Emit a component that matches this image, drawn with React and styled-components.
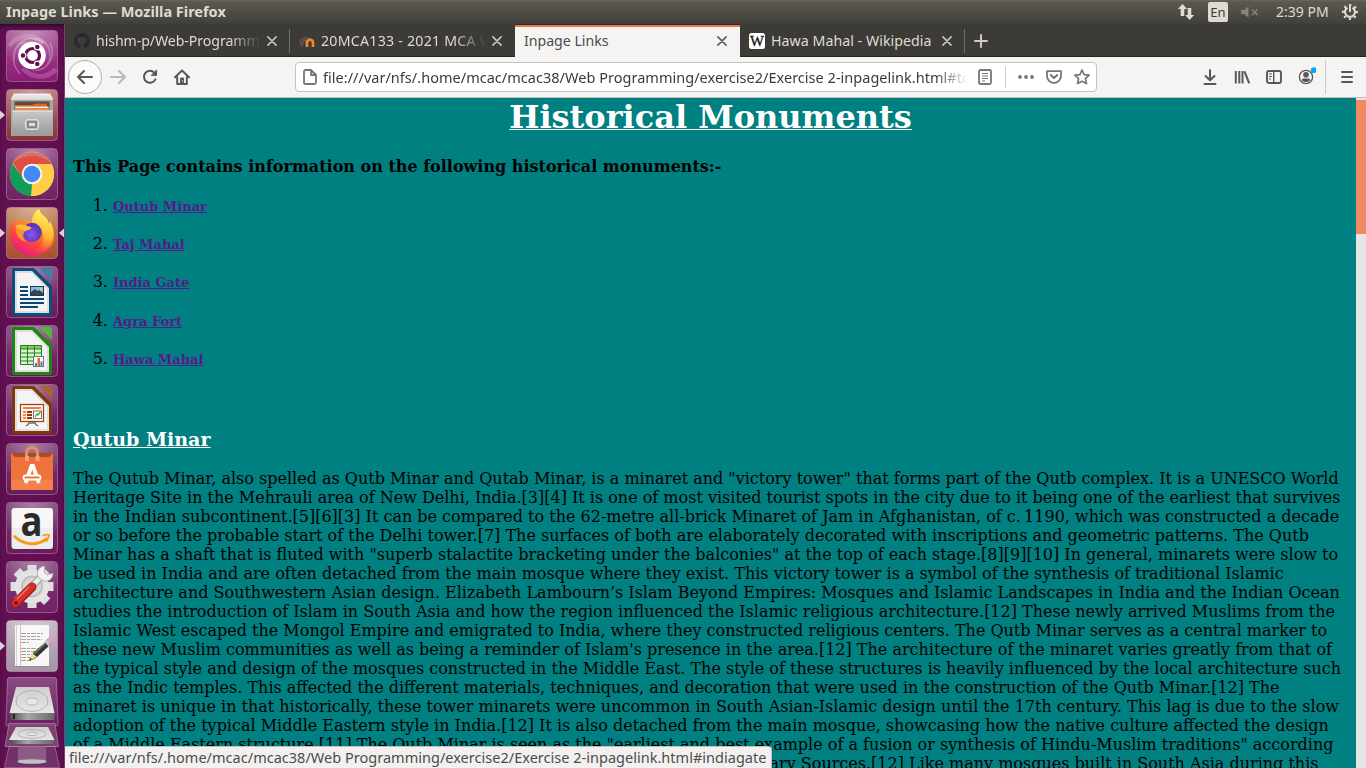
import React from "react";
import styled, { createGlobalStyle, css } from "styled-components";
import { FaGithub } from "react-icons/fa";

const uiFont = `"Noto Sans", "Open Sans", sans-serif`;
const pageFont = `"DejaVu Serif", serif`;

const Global = createGlobalStyle`
  * { box-sizing: border-box; }
  html, body { margin: 0; padding: 0; overflow: hidden; background: #3c3b37; }
  svg { display: block; flex: none; }
`;

/* ---------- desktop shell ---------- */

const Desktop = styled.div`
  width: 1366px;
  height: 768px;
  display: flex;
  flex-direction: column;
  overflow: hidden;
  font-family: ${uiFont};
`;

const TopPanel = styled.header`
  height: 24px;
  flex: none;
  display: flex;
  align-items: center;
  justify-content: space-between;
  padding: 0 7px 0 6px;
  background: linear-gradient(#69675a 0, #5b594f 2px, #403f3a 24px);
  color: #dfdbd2;
`;

const WindowTitle = styled.span`
  font-size: 14.5px;
  font-weight: 700;
  line-height: 22px;
  height: 24px;
  white-space: nowrap;
`;

const Indicators = styled.div`
  display: flex;
  align-items: center;
`;

const Language = styled.span`
  width: 20px;
  height: 20px;
  margin: 0 13px 0 13px;
  border-radius: 2px;
  background: #dfdbd2;
  color: #3c3b37;
  font-size: 13px;
  line-height: 21px;
  text-align: center;
`;

const Clock = styled.span`
  width: 53px;
  margin: 0 12px 0 17px;
  font-size: 14px;
  line-height: 24px;
  white-space: nowrap;
`;

const Workspace = styled.div`
  flex: 1;
  min-height: 0;
  display: flex;
`;

/* ---------- launcher ---------- */

const LauncherBar = styled.nav`
  width: 65px;
  flex: none;
  display: flex;
  flex-direction: column;
  gap: 7px;
  padding-top: 6px;
  border-right: 1px solid #873a76;
  background: linear-gradient(90deg, #5f1050 0, #660f54 50%, #5c0f4d 100%);
  box-shadow: inset 0 4px 4px -2px rgba(0, 0, 0, 0.55);
`;

const LauncherRow = styled.div`
  height: 52px;
  flex: none;
  display: flex;
  align-items: center;
`;

const Pip = styled.span`
  width: 6px;
  height: 10px;
  flex: none;
  background: ${(p) => (p.$on ? "#d9d2da" : "transparent")};
  clip-path: ${(p) =>
    p.$left ? "polygon(0 5%, 85% 50%, 0 95%)" : "polygon(100% 5%, 15% 50%, 100% 95%)"};
`;

const FoldedStack = styled.div`
  height: 96px;
  flex: none;
  margin-top: -2px;
  padding-left: 3px;
`;

/* ---------- browser chrome ---------- */

const Browser = styled.section`
  position: relative;
  flex: 1;
  min-width: 0;
  display: flex;
  flex-direction: column;
`;

const TabStrip = styled.div`
  height: 33px;
  flex: none;
  display: flex;
  background: #3c3b37;
  box-shadow: inset 0 -1px 0 #252422;
`;

const TabBox = styled.div`
  width: 225px;
  height: 33px;
  display: flex;
  align-items: center;
  gap: 6px;
  padding: 1px 13px 0 9px;
  color: #dfdbd2;
  ${(p) =>
    p.$active &&
    css`
      padding-top: 0;
      border-top: 1px solid #2b2a27;
      box-shadow: inset 0 2px 0 #f07746;
      background: #f5f4f2;
      color: #4c4c4c;
    `}
`;

const TabTitle = styled.span`
  flex: 1;
  min-width: 0;
  overflow: hidden;
  white-space: nowrap;
  font-size: 14.2px;
  line-height: 20px;
  letter-spacing: ${(p) => p.$spacing || 0}px;
  ${(p) =>
    p.$fade &&
    css`
      mask-image: linear-gradient(90deg, #000 calc(100% - 32px), transparent 100%);
    `}
`;

const Divider = styled.span`
  width: 1px;
  height: ${(p) => p.$h || 24}px;
  flex: none;
  align-self: center;
  margin: ${(p) => p.$m || 0};
  background: ${(p) => p.$color || "#6f6e69"};
`;

const NewTab = styled.div`
  display: flex;
  align-items: center;
  padding-left: 9px;
`;

const Toolbar = styled.div`
  height: 41px;
  flex: none;
  display: flex;
  align-items: center;
  padding: 0 3px;
  border-bottom: 1px solid #c5c2bd;
  background: #f5f4f2;
`;

const ToolButton = styled.span`
  width: 32px;
  height: 32px;
  flex: none;
  display: flex;
  align-items: center;
  justify-content: center;
  color: ${(p) => (p.$dim ? "#b9b8b7" : "#585856")};
`;

const BackButton = styled(ToolButton)`
  width: 34px;
  height: 34px;
  border: 1px solid #b0aeab;
  border-radius: 50%;
  background: #fbfbfa;
`;

const AddressBar = styled.div`
  width: 802px;
  height: 30px;
  margin: 0 97px;
  flex: none;
  display: flex;
  align-items: center;
  padding: 0 0 0 7px;
  border: 1px solid #c6c3be;
  border-radius: 4px;
  background: #fff;
  color: #777775;
`;

const Url = styled.span`
  width: 650px;
  margin-left: 6px;
  overflow: hidden;
  white-space: nowrap;
  color: #3b3b3b;
  font-size: 14.5px;
  letter-spacing: 0.023px;
  line-height: 26px;
  mask-image: linear-gradient(90deg, #000 calc(100% - 36px), transparent calc(100% - 3px));
`;

const BarIcon = styled.span`
  width: 28px;
  display: flex;
  justify-content: center;
`;

/* ---------- web page ---------- */

const Viewport = styled.div`
  flex: 1;
  min-height: 0;
  display: flex;
  overflow: hidden;
`;

const Page = styled.main`
  flex: 1;
  min-width: 0;
  padding: 0 8px;
  overflow: hidden;
  background: #008080;
  color: #000;
  font-family: ${pageFont};
  font-size: 16px;
  line-height: 19px;
`;

const PageTitle = styled.h1`
  margin: 0;
  color: #fff;
  font-size: 32px;
  line-height: 38px;
  text-align: center;
  text-decoration: underline;
  text-decoration-thickness: 1px;
`;

const Intro = styled.p`
  margin: 21px 0 20px;
  font-weight: 700;
`;

const Contents = styled.ol`
  margin: 0;
  padding-left: 40px;
`;

const ContentsItem = styled.li`
  height: 38.2px;
`;

const ContentsLink = styled.a`
  color: #551a8b;
  font-size: 13px;
  font-weight: 700;
  text-decoration: underline;
`;

const SectionTitle = styled.h3`
  margin: 41px 0 19px;
  color: #fff;
  font-size: 19.05px;
  line-height: 22px;
  text-decoration: underline;
`;

const Article = styled.p`
  margin: 0;
`;

const Line = styled.span`
  display: flex;
  height: 19px;
  white-space: nowrap;
  ${(p) =>
    p.$width &&
    css`
      width: ${p.$width}px;
      justify-content: flex-end;
    `}
`;

const Scrollbar = styled.div`
  width: 10px;
  flex: none;
  padding-top: 2px;
  background: #e6e6e6;
`;

const Thumb = styled.div`
  height: 134px;
  background: #f08a65;
`;

const StatusTip = styled.div`
  position: absolute;
  left: 0;
  bottom: 0;
  width: 707px;
  height: 22px;
  padding-left: 4px;
  border: solid #c3c0bb;
  border-width: 1px 1px 0 0;
  border-top-right-radius: 4px;
  background: #f2f1f0;
  color: #4c4c4c;
  font-size: 14.5px;
  letter-spacing: 0.018px;
  line-height: 20px;
  white-space: nowrap;
`;

/* ---------- small icons ---------- */

const Close = ({ color }) => (
  <svg width="10" height="10" viewBox="0 0 10 10" stroke={color} strokeWidth="1.6" strokeLinecap="round">
    <path d="M.9.9l8.2 8.2M9.1.9L.9 9.1" />
  </svg>
);

const Moodle = () => (
  <svg width="16" height="16" viewBox="0 0 16 16" fill="none">
    <path d="M3.200 13.500V10a2.300 2.300 0 014.600 0" stroke="#74503a" strokeWidth="2" />
    <path d="M8 14V9.600a3 3 0 016 0V14" stroke="#f08433" strokeWidth="2.700" />
    <path d="M.6 6.400L6 3.800l4.200.6-3.400 2.400L2 7.200z" fill="#55524e" />
    <path d="M1.200 7v4.500" stroke="#6b5a4c" strokeWidth="1" />
  </svg>
);

const Wikipedia = () => (
  <svg width="16" height="16" viewBox="0 0 16 16">
    <rect width="16" height="16" rx="2.5" fill="#fff" />
    <text x="8" y="13" textAnchor="middle" fontFamily="Liberation Serif, serif" fontSize="14.5" stroke="#111" strokeWidth=".3" textLength="14" lengthAdjust="spacingAndGlyphs" fill="#111">W</text>
  </svg>
);

const line = { fill: "none", stroke: "currentColor", strokeWidth: 2, strokeLinecap: "round", strokeLinejoin: "round" };

const Back = () => (
  <svg width="16" height="16" viewBox="0 0 16 16" {...line}><path d="M15 8H1.5M7 2L1 8l6 6" /></svg>
);
const Forward = () => (
  <svg width="16" height="16" viewBox="0 0 16 16" {...line}><path d="M1 8h13.5M9 2l6 6-6 6" /></svg>
);
const Reload = () => (
  <svg width="16" height="16" viewBox="0 0 16 16" {...line}>
    <path d="M13.4 10.4a6 6 0 11-1.1-6.8L14 5.5" />
    <path d="M14.6 1.3v5h-5z" fill="currentColor" strokeWidth="1" />
  </svg>
);
const Home = () => (
  <svg width="16" height="16" viewBox="0 0 16 16" {...line}>
    <path d="M1 8.3l7-6.8 7 6.8M3.2 8v7h9.6V8" />
    <path d="M6.5 14.5V9h3v5.5z" fill="currentColor" strokeWidth="1" />
    <path d="M8.5 11.7v.3" stroke="#f5f4f2" strokeWidth="1" />
  </svg>
);
const FileIcon = () => (
  <svg width="14" height="16" viewBox="0 0 14 16" {...line} strokeWidth="1.8">
    <path d="M2.5 1H8l5 5v7.5A1.5 1.5 0 0111.5 15h-9A1.5 1.5 0 011 13.5v-11A1.5 1.5 0 012.5 1zM8 1.3V6h4.8" />
  </svg>
);
const Reader = () => (
  <svg width="14" height="16" viewBox="0 0 14 16" {...line} strokeWidth="1.8">
    <rect x="1" y="1" width="12" height="14" rx="1.5" />
    <path d="M4 4.5h6M4 7h6M4 9.5h6M4 12h3" strokeWidth="1" strokeLinecap="butt" />
  </svg>
);
const Dots = () => (
  <svg width="16" height="4" viewBox="0 0 16 4" fill="currentColor"><circle cx="2" cy="2" r="1.9" /><circle cx="8" cy="2" r="1.9" /><circle cx="14" cy="2" r="1.9" /></svg>
);
const Pocket = () => (
  <svg width="16" height="16" viewBox="0 0 16 16" {...line}>
    <path d="M1 2.2h14V7A7 7 0 011 7z" strokeWidth="1.8" /><path d="M4.8 6L8 9l3.2-3" />
  </svg>
);
const Star = () => (
  <svg width="16" height="16" viewBox="0 0 16 16" {...line} strokeWidth="1.7">
    <path d="M8 1l2.15 4.6 5 .6-3.7 3.4 1 5L8 12.2l-4.45 2.4 1-5L.85 6.2l5-.6z" />
  </svg>
);
const Download = () => (
  <svg width="16" height="16" viewBox="0 0 16 16" {...line}><path d="M8 1v10M3.5 7L8 11.3 12.5 7M2.5 15h11" /></svg>
);
const Library = () => (
  <svg width="16" height="16" viewBox="0 0 16 16" {...line} strokeLinecap="butt"><path d="M1.8 2v12.5M5.3 2v12.5M8.500 2v12.5M10.5 2.3l4.7 12" /></svg>
);
const Sidebar = () => (
  <svg width="16" height="16" viewBox="0 0 16 16" {...line} strokeWidth="1.9">
    <rect x="1" y="2" width="14" height="12" rx="2" /><path d="M7.7 2v12" strokeWidth="1.4" /><path d="M3 5h3M3 7.5h3M3 10h2" strokeWidth="1" strokeLinecap="butt" />
  </svg>
);
const Account = () => (
  <svg width="20" height="20" viewBox="-1 1 20 20" {...line} strokeWidth="1.3">
    <circle cx="9" cy="11" r="6.6" />
    <circle cx="9" cy="8.8" r="2.8" fill="currentColor" stroke="none" />
    <path d="M4.6 14c1.2-2.2 2.5-1.5 4.4-1.5s3.2-.7 4.4 1.5c-2.2 2.8-6.6 2.8-8.8 0z" fill="currentColor" stroke="none" />
    <circle cx="16.800" cy="4.200" r="2.900" fill="#00a9f4" stroke="none" />
  </svg>
);
const Menu = () => (
  <svg width="14" height="14" viewBox="0 0 14 14" {...line}><path d="M2 2h10M2 7h10M2 12h10" /></svg>
);

const Network = () => (
  <svg width="18" height="18" viewBox="0 0 18 18" fill="#dfdbd2">
    <path d="M5.5 1l4.700 5H7.3v7H3.7V6H.8zM12.5 17l-4.300-5h2.5V5h3.6v7h2.9z" />
  </svg>
);
const Muted = () => (
  <svg width="18" height="12" viewBox="0 0 18 12" fill="#84827b">
    <path d="M0 4h3l4.500-3.500v11L3 8H0z" /><path d="M11 3.500l5.500 5.500M16.500 3.500L11 9" stroke="#84827b" strokeWidth="1.600" />
  </svg>
);
const Session = () => (
  <svg width="18" height="18" viewBox="0 0 18 18" fill="none" stroke="#dfdbd2">
    <circle cx="9" cy="9" r="7" strokeWidth="2.2" strokeDasharray="2.2 3.298" strokeDashoffset="1.1" />
    <path d="M6.5 4.6a5 5 0 105 0" strokeWidth="2.2" /><path d="M9 2v7" strokeWidth="2" />
  </svg>
);

/* ---------- launcher tiles ---------- */

const Tile = ({ id, from, to, children }) => (
  <svg width="52" height="52" viewBox="0 0 52 52">
    <defs>
      <linearGradient id={`tile-${id}`} x1="0" y1="0" x2="0" y2="1">
        <stop offset="0" stopColor={from} /><stop offset="1" stopColor={to} />
      </linearGradient>
      <radialGradient id={`shine-${id}`} cx=".5" cy="0" r=".75">
        <stop offset="0" stopColor="#fff" stopOpacity=".36" /><stop offset="1" stopColor="#fff" stopOpacity="0" />
      </radialGradient>
    </defs>
    <rect x=".5" y=".5" width="51" height="51" rx="4" fill={`url(#tile-${id})`} stroke="#fff" strokeOpacity=".28" />
    <rect x="1" y="1" width="50" height="50" rx="4" fill={`url(#shine-${id})`} />
    {children}
  </svg>
);

const Dash = () => (
  <Tile id="dash" from="#a5508f" to="#8d1a78">
    <g fill="none" stroke="#fff">
      <path d="M8 30C6 12 24 2 37 13M44 13c8 16-6 31-19 26M14 44C2 30 8 14 20 12M30 8c15 3 19 22 7 31" strokeOpacity=".3" strokeWidth="1.4" />
      <path d="M3 16C12 4 27 3 38 14M50 39C40 50 25 48 17 38" strokeOpacity=".18" strokeWidth="5" />
    </g>
    <circle cx="26" cy="26.5" r="14" fill="#3b0c32" opacity=".35" />
    <circle cx="26" cy="25.5" r="13.8" fill="#fff" />
    <circle cx="26.5" cy="25.5" r="7" fill="none" stroke="#5f1050" strokeWidth="3.2" />
    <g fill="#5f1050" stroke="#fff" strokeWidth="1.2">
      <circle cx="17" cy="25.5" r="2.9" /><circle cx="31.3" cy="17" r="2.9" /><circle cx="31.3" cy="34" r="2.9" />
    </g>
  </Tile>
);

const Files = () => (
  <Tile id="files" from="#b26a6c" to="#8b3038">
    <defs>
      <linearGradient id="cabinet-front" x1="0" y1="0" x2="0" y2="1">
        <stop offset="0" stopColor="#c9c9c9" /><stop offset="1" stopColor="#9a9a9a" />
      </linearGradient>
      <linearGradient id="cabinet-top" x1="0" y1="0" x2="0" y2="1">
        <stop offset="0" stopColor="#f2f2f2" /><stop offset="1" stopColor="#cfcfcf" />
      </linearGradient>
    </defs>
    <path d="M8 4.500h36l3 5v3H5v-3z" fill="url(#cabinet-top)" /><path d="M5 11h42v36H5z" fill="#a5a5a5" />
    <path d="M8.500 12.500h35v9h-35z" fill="#5a4a40" />
    <path d="M9 16h17l3-1.500h12V20H9z" fill="#d9672b" /><path d="M9.500 17.500h33v1.500h-33z" fill="#f3ead9" /><path d="M9 19h34v2.700H9z" fill="#e88a47" />
    <path d="M6.500 21.500h40v25h-40z" fill="url(#cabinet-front)" /><path d="M6.500 21.500h40v1h-40z" fill="#ececec" />
    <rect x="19.500" y="30.500" width="13" height="10" rx="2" fill="#bdbdbd" stroke="#e2e2e2" />
    <rect x="22" y="33" width="8" height="5" fill="#dcdcdc" stroke="#4a4a4a" />
  </Tile>
);

const Chrome = () => (
  <Tile id="chrome" from="#85407b" to="#6e255f">
    <circle cx="26" cy="26" r="22" fill="#ffce44" />
    <path d="M6.5 15.8A22 22 0 0025 48l9.5-17.5H17.5z" fill="#109d58" />
    <path d="M45.6 16H26v20.5L25 48A22 22 0 0045.6 16z" fill="#ffce44" />
    <path d="M6.9 15A22 22 0 0145.6 16H26l-8.5 15z" fill="#dc4f42" />
    <circle cx="26" cy="26" r="10.3" fill="#f4f4f4" /><circle cx="26" cy="26" r="8.3" fill="#4587f3" />
    <path d="M6 16A22 22 0 0146 16C32 5 18 6 6 16z" fill="#fff" opacity=".17" />
  </Tile>
);

const Firefox = () => (
  <Tile id="firefox" from="#c28357" to="#a94f2d">
    <defs>
      <linearGradient id="ff-body" x1=".8" y1="0" x2=".25" y2="1">
        <stop offset="0" stopColor="#fff44f" /><stop offset=".35" stopColor="#ffa024" /><stop offset=".65" stopColor="#ff4a3a" /><stop offset="1" stopColor="#e31587" />
      </linearGradient>
      <radialGradient id="ff-globe" cx=".45" cy=".6"><stop offset="0" stopColor="#8a5af5" /><stop offset="1" stopColor="#5a34b8" /></radialGradient>
      <linearGradient id="ff-tail" x1=".6" y1="0" x2=".4" y2="1">
        <stop offset="0" stopColor="#fff66b" /><stop offset=".6" stopColor="#ffc02f" stopOpacity=".8" /><stop offset="1" stopColor="#ff7139" stopOpacity="0" />
      </linearGradient>
    </defs>
    <path d="M5 18c1-3 2-4 3.500-5.500l1 4 3.500-5.500 2.500 4.500c3-2 7-2 10-1C26.500 9 29 4 33 2c1 5 4 6 7 9 2 2 2 4 3 6 1-1 1-2 1-3 4 7 6 16 2 24C37 53 15 52 7 38 3.500 31 3 25 5 18z" fill="url(#ff-body)" />
    <path d="M33 2c1 5 4 6 7 9 2 2 2 4 3 6 1-1 1-2 1-3 5 10 4 22-5 29-5 3-10 3-14 2 10-3 15-12 11-21-2-4-6-6-10-6-1-6 2-13 7-16z" fill="url(#ff-tail)" />
    <circle cx="26" cy="25.500" r="9.700" fill="url(#ff-globe)" />
    <path d="M10 18.500c4-2 8-1 11 .5l4.500 1.500c-1.500 3-6.500 2.500-7.500 5-1 3-2 6 3 9C13 35 8 25 10 18.500z" fill="#ff9230" />
    <path d="M10 18.500c4-2 8-1 11 .5l4.500 1.500c-1 2-4.500 2.500-6.500 3.500-4-2-7-2-9-5.500z" fill="#ffbd3e" />
  </Tile>
);

const Doc = ({ id, color, corner, children }) => (
  <Tile id={id} from="#7c3a75" to="#691b5b">
    <path d="M8 2h20l18 18v27a3 3 0 01-3 3H9a3 3 0 01-3-3V4a2 2 0 012-2z" fill={color} />
    <path d="M33 2h11a2 2 0 012 2v11z" fill={corner} />
    <path d="M9 5h17l17 17v25H9z" fill="#dedede" /><path d="M11 7h14.500l15.500 16v22H11z" fill="#f4f4f4" />
    {children}
  </Tile>
);

const Writer = () => (
  <Doc id="writer" color="#104d7c" corner="#3f7fac">
    <path d="M14 21h8M14 25h8M14 29h8M14 33h24M14 37h24M14 41h18" stroke="#07487b" strokeWidth="1.9" />
    <rect x="24.5" y="20.5" width="13" height="9" fill="#86bfe6" stroke="#143f5f" />
    <path d="M25 29v-3l4-3 2 2 2-1 4 3v2z" fill="#35434a" /><circle cx="35.3" cy="22.8" r="1.3" fill="#f4c64a" />
  </Doc>
);

const Calc = () => (
  <Doc id="calc" color="#1d8613" corner="#56b53e">
    <path d="M14 20h22v20H14z" fill="#d9f5cf" /><path d="M14 20h22v4H14z" fill="#80cf65" />
    <path d="M14.5 20.5h21v19h-21zM14 24h22M14 28h22M14 32h22M14 36h22M21.500 20v20M28.500 20v20" stroke="#23821a" fill="none" />
    <rect x="27.5" y="31.5" width="10" height="10" fill="#fff" stroke="#777" />
    <path d="M29 38h2v3h-2z" fill="#377ec0" /><path d="M31.5 33h2.5v8h-2.5z" fill="#e06a25" /><path d="M34.5 36.5h2V41h-2z" fill="#2c86c6" />
  </Doc>
);

const Impress = () => (
  <Doc id="impress" color="#7f370e" corner="#a66336">
    <rect x="14.5" y="20.5" width="23" height="17" fill="#fff4e9" stroke="#a13d0d" strokeWidth="1.2" />
    <path d="M17 24h18" stroke="#e58252" strokeWidth="2" />
    <path d="M17 28h3M17 31h3M17 34h3" stroke="#ef8a55" strokeWidth="1.8" /><path d="M21 28h5M21 31h5M21 34h5" stroke="#93370b" strokeWidth="1.8" />
    <rect x="27.5" y="27" width="8" height="7.5" fill="#fff" stroke="#777" /><path d="M29 33l2-3 1 1 2.5-3" fill="none" stroke="#36a832" strokeWidth="1.3" />
    <path d="M25 38l-5 4M27 38l5 4M22 39h8" stroke="#757575" strokeWidth="1.5" />
  </Doc>
);

const Software = () => (
  <Tile id="software" from="#7c3a75" to="#691b5b">
    <path d="M5 10h42v7H5z" fill="#a84c21" /><path d="M5 10l4 4h34l4-4v37H5z" fill="#ee7239" />
    <path d="M5 37h42v10H5z" fill="#f58550" opacity=".75" />
    <path d="M20.5 16V9c0-6 11-6 11 0v7" fill="none" stroke="#ee8a60" strokeWidth="3" />
    <path d="M19 13h4v5h-4zM29.500 13h4v5h-4z" fill="#f4a17b" />
    <g fill="none" stroke="#fff">
      <path d="M19.500 40l6-17h1.500l6 17" strokeWidth="3.8" /><rect x="17.5" y="32.5" width="17" height="4" rx="2" strokeWidth="1.8" fill="#ee7239" />
    </g>
  </Tile>
);

const Amazon = () => (
  <Tile id="amazon" from="#7c3a75" to="#691b5b">
    <rect x="5.5" y="6" width="41.5" height="41" rx="3" fill="#ececec" /><rect x="6" y="6" width="40.5" height="20" rx="3" fill="#f7f7f7" />
    <text x="25.5" y="34" textAnchor="middle" fontFamily="Open Sans, Noto Sans, sans-serif" fontSize="41" fontWeight="700" fill="#2a2a2a" textLength="22" lengthAdjust="spacingAndGlyphs">a</text>
    <path d="M8.500 34.500c10 9.500 23 9 32 2.500" fill="none" stroke="#f79b16" strokeWidth="2.8" strokeLinecap="round" />
    <path d="M37 33.500c3-1 5-1 6-.5 0 2-1 4-2.500 6" fill="none" stroke="#f79b16" strokeWidth="1.8" strokeLinecap="round" />
  </Tile>
);

const Settings = () => (
  <Tile id="settings" from="#7c3a75" to="#732164">
    <g stroke="#dedede" strokeWidth="9">
      {[0, 45, 90, 135].map((a) => (<path key={a} d="M26 4v43" transform={`rotate(${a} 26 25.5)`} />))}
    </g>
    <circle cx="26" cy="25.5" r="17" fill="#e4e4e4" /><circle cx="26" cy="25.5" r="11" fill="#bfbfbf" /><circle cx="26" cy="25.5" r="9" fill="#d8d8d8" />
    <path d="M25 26l12-12" stroke="#9d9d9d" strokeWidth="7" /><path d="M24 27l13-13" stroke="#ececec" strokeWidth="5" />
    <path d="M33 17c-4-6 0-12 6-12l-1 6 3 3 6-2c0 7-6 10-11 7z" fill="#f2f2f2" stroke="#999" strokeWidth=".7" />
    <path d="M9.5 42.5L26 26" stroke="#a31818" strokeWidth="9" strokeLinecap="round" /><path d="M9.5 42L26 25.5" stroke="#d92e2c" strokeWidth="7" strokeLinecap="round" />
    <path d="M11 38l12-12" stroke="#f17b73" strokeWidth="1.2" /><circle cx="10" cy="42" r="1.7" fill="#5e1010" />
  </Tile>
);

const Editor = () => (
  <Tile id="editor" from="#bdb0bd" to="#a696a5">
    <path d="M9 6h34v41H9z" fill="#867b86" opacity=".5" /><path d="M9 5h34v41H9z" fill="#f7f7f5" />
    <path d="M14.500 5v41" stroke="#efb4b4" /><path d="M10.500 5v41" stroke="#c8d6ea" />
    <path d="M15 13.5h22M15 16.5h20M15 19.5h21M15 22.5h8M15 28.5h17M15 31.5h15M15 34.5h12M15 37.5h12M15 40.5h10" stroke="#8b8b8b" strokeWidth=".8" strokeDasharray="5 1 3 1" />
    <path d="M24 41l3-8 15-13 3 4-15 14z" fill="#343434" /><path d="M28 34l14-13" stroke="#777" strokeWidth="1.5" />
    <path d="M23 41l3-8 5 4z" fill="#f0dc78" /><path d="M23 41l1.3-3.3 1.5 1.4z" fill="#222" />
    <path d="M40 20l3-3c3-1 5 2 4 4l-3 3z" fill="#dda0d2" /><path d="M38.500 21.500l2-2 4 5-2 2z" fill="#c8c8c8" />
  </Tile>
);

const Drives = () => (
  <svg width="60" height="91" viewBox="0 0 60 91">
    <defs>
      <linearGradient id="drive-top" x1="0" y1="0" x2="0" y2="1"><stop offset="0" stopColor="#cfcfcf" /><stop offset="1" stopColor="#e6e6e6" /></linearGradient>
      <linearGradient id="drive-front" x1="0" y1="0" x2="1" y2="0"><stop offset="0" stopColor="#4a4a4a" /><stop offset=".4" stopColor="#a6a6a6" /><stop offset="1" stopColor="#686868" /></linearGradient>
      <linearGradient id="drive-tile" x1="0" y1="0" x2="0" y2="1"><stop offset="0" stopColor="#8a4c82" /><stop offset="1" stopColor="#6a1d5c" /></linearGradient>
    </defs>
    <path d="M4.500 2.500q0-2 2-2h45q2 0 2 2l1.500 46H3z" fill="url(#drive-tile)" stroke="#fff" strokeOpacity=".3" />
    <path d="M13 10h33l5.500 26H6.500z" fill="url(#drive-top)" /><path d="M6.500 36h45l-.5 7H7z" fill="url(#drive-front)" />
    <g fill="none" stroke="#b3b3b3"><ellipse cx="29" cy="24" rx="16" ry="10.5" /><ellipse cx="29" cy="24.500" rx="6" ry="3.5" fill="#e6e6e6" /></g>
    <path d="M11 37v5" stroke="#222" strokeWidth="2" />
    <path d="M6 46.500h46l3.500 23H2z" fill="#814a79" fillOpacity=".82" stroke="#fff" strokeOpacity=".3" />
    <path d="M13 50h32l6.500 13H6z" fill="url(#drive-top)" /><path d="M6 63h45.500l-1.500 4H8z" fill="url(#drive-front)" />
    <g fill="none" stroke="#b3b3b3"><ellipse cx="29" cy="57" rx="14" ry="4.5" /><ellipse cx="29" cy="57" rx="5" ry="1.8" fill="#e6e6e6" /></g>
    <path d="M6 69.500h46l4.500 21h-55z" fill="#7b3f73" fillOpacity=".7" stroke="#fff" strokeOpacity=".28" />
    <path d="M15 69.500h28v15H15z" fill="#8c5b85" /><ellipse cx="29" cy="84.500" rx="14.500" ry="2.3" fill="#c4bfc4" />
  </svg>
);

const apps = [
  { Icon: Dash },
  { Icon: Files, running: true },
  { Icon: Chrome },
  { Icon: Firefox, running: true, focused: true },
  { Icon: Writer },
  { Icon: Calc },
  { Icon: Impress },
  { Icon: Software },
  { Icon: Amazon },
  { Icon: Settings },
  { Icon: Editor, running: true },
];

const tabs = [
  { title: "hishm-p/Web-Programming", icon: <FaGithub size={16} color="#24292e" />, fade: true, spacing: -0.1 },
  { title: "20MCA133 - 2021 MCA Web", icon: <Moodle />, fade: true, spacing: 0.23 },
  { title: "Inpage Links", active: true, spacing: -0.04 },
  { title: "Hawa Mahal - Wikipedia", icon: <Wikipedia />, spacing: 0.04 },
];

const monuments = ["Qutub Minar", "Taj Mahal", "India Gate", "Agra Fort", "Hawa Mahal"];

const articleLines = [
  { text: 'The Qutub Minar, also spelled as Qutb Minar and Qutab Minar, is a minaret and "victory tower" that forms part of the Qutb complex. It is a UNESCO World' },
  { text: "Heritage Site in the Mehrauli area of New Delhi, India.[3][4] It is one of most visited tourist spots in the city due to it being one of the earliest that survives" },
  { text: "in the Indian subcontinent.[5][6][3] It can be compared to the 62-metre all-brick Minaret of Jam in Afghanistan, of c.\u20091190, which was constructed a decade" },
  { text: "or so before the probable start of the Delhi tower.[7] The surfaces of both are elaborately decorated with inscriptions and geometric patterns. The Qutb" },
  { text: 'Minar has a shaft that is fluted with "superb stalactite bracketing under the balconies" at the top of each stage.[8][9][10] In general, minarets were slow to' },
  { text: "be used in India and are often detached from the main mosque where they exist. This victory tower is a symbol of the synthesis of traditional Islamic" },
  { text: "architecture and Southwestern Asian design. Elizabeth Lambourn’s Islam Beyond Empires: Mosques and Islamic Landscapes in India and the Indian Ocean" },
  { text: "studies the introduction of Islam in South Asia and how the region influenced the Islamic religious architecture.[12] These newly arrived Muslims from the" },
  { text: "Islamic West escaped the Mongol Empire and emigrated to India, where they constructed religious centers. The Qutb Minar serves as a central marker to" },
  { text: "these new Muslim communities as well as being a reminder of Islam's presence in the area.[12] The architecture of the minaret varies greatly from that of" },
  { text: "the typical style and design of the mosques constructed in the Middle East. The style of these structures is heavily influenced by the local architecture such" },
  { text: "as the Indic temples. This affected the different materials, techniques, and decoration that were used in the construction of the Qutb Minar.[12] The" },
  { text: "minaret is unique in that historically, these tower minarets were uncommon in South Asian-Islamic design until the 17th century. This lag is due to the slow" },
  { text: "adoption of the typical Middle Eastern style in India.[12] It is also detached from the main mosque, showcasing how the native culture affected the design" },
  { text: 'of a Middle Eastern structure.[11] The Qutb Minar is seen as the "earliest and best example of a fusion or synthesis of Hindu-Muslim traditions" according' },
  { text: "ary Sources.[12] Like many mosques built in South Asia during this", width: 1245.5 },
];

export default function App() {
  return (
    <>
      <Global />
      <Desktop>
        <TopPanel>
          <WindowTitle>Inpage Links — Mozilla Firefox</WindowTitle>
          <Indicators>
            <Network />
            <Language>En</Language>
            <Muted />
            <Clock>2:39 PM</Clock>
            <Session />
          </Indicators>
        </TopPanel>
        <Workspace>
          <LauncherBar>
            {apps.map(({ Icon, running, focused }, i) => (
              <LauncherRow key={i}>
                <Pip $left $on={running} />
                <Icon />
                <Pip $on={focused} />
              </LauncherRow>
            ))}
            <FoldedStack><Drives /></FoldedStack>
          </LauncherBar>
          <Browser>
            <TabStrip>
              {tabs.map((t, i) => (
                <React.Fragment key={t.title}>
                  <TabBox $active={t.active}>
                    {t.icon}
                    <TabTitle $fade={t.fade} $spacing={t.spacing}>{t.title}</TabTitle>
                    <Close color={t.active ? "#5c5c5a" : "#c9c5bd"} />
                  </TabBox>
                  {(i === 0 || i === 3) && <Divider $m="0 0 0 -1px" />}
                </React.Fragment>
              ))}
              <NewTab>
                <svg width="14" height="14" viewBox="0 0 14 14" stroke="#cfcbc3" strokeWidth="2" strokeLinecap="round">
                  <path d="M7 1v12M1 7h12" />
                </svg>
              </NewTab>
            </TabStrip>
            <Toolbar>
              <BackButton><Back /></BackButton>
              <ToolButton $dim><Forward /></ToolButton>
              <ToolButton><Reload /></ToolButton>
              <ToolButton><Home /></ToolButton>
              <AddressBar>
                <FileIcon />
                <Url>file:///var/nfs/.home/mcac/mcac38/Web Programming/exercise2/Exercise 2-inpagelink.html#top</Url>
                <BarIcon><Reader /></BarIcon>
                <Divider $h={22} $color="#cfcfcf" $m="0 6px" />
                <BarIcon><Dots /></BarIcon>
                <BarIcon><Pocket /></BarIcon>
                <BarIcon><Star /></BarIcon>
              </AddressBar>
              <ToolButton><Download /></ToolButton>
              <ToolButton><Library /></ToolButton>
              <ToolButton><Sidebar /></ToolButton>
              <ToolButton><Account /></ToolButton>
              <Divider $h={34} $color="#cccac7" $m="0 5px 0 3px" />
              <ToolButton><Menu /></ToolButton>
            </Toolbar>
            <Viewport>
              <Page>
                <PageTitle>Historical Monuments</PageTitle>
                <Intro>This Page contains information on the following historical monuments:-</Intro>
                <Contents>
                  {monuments.map((m) => (
                    <ContentsItem key={m}><ContentsLink>{m}</ContentsLink></ContentsItem>
                  ))}
                </Contents>
                <SectionTitle>Qutub Minar</SectionTitle>
                <Article>
                  {articleLines.map((l, i) => (
                    <Line key={i} $width={l.width}>{l.text}</Line>
                  ))}
                </Article>
              </Page>
              <Scrollbar><Thumb /></Scrollbar>
            </Viewport>
            <StatusTip>file:///var/nfs/.home/mcac/mcac38/Web Programming/exercise2/Exercise 2-inpagelink.html#indiagate</StatusTip>
          </Browser>
        </Workspace>
      </Desktop>
    </>
  );
}
